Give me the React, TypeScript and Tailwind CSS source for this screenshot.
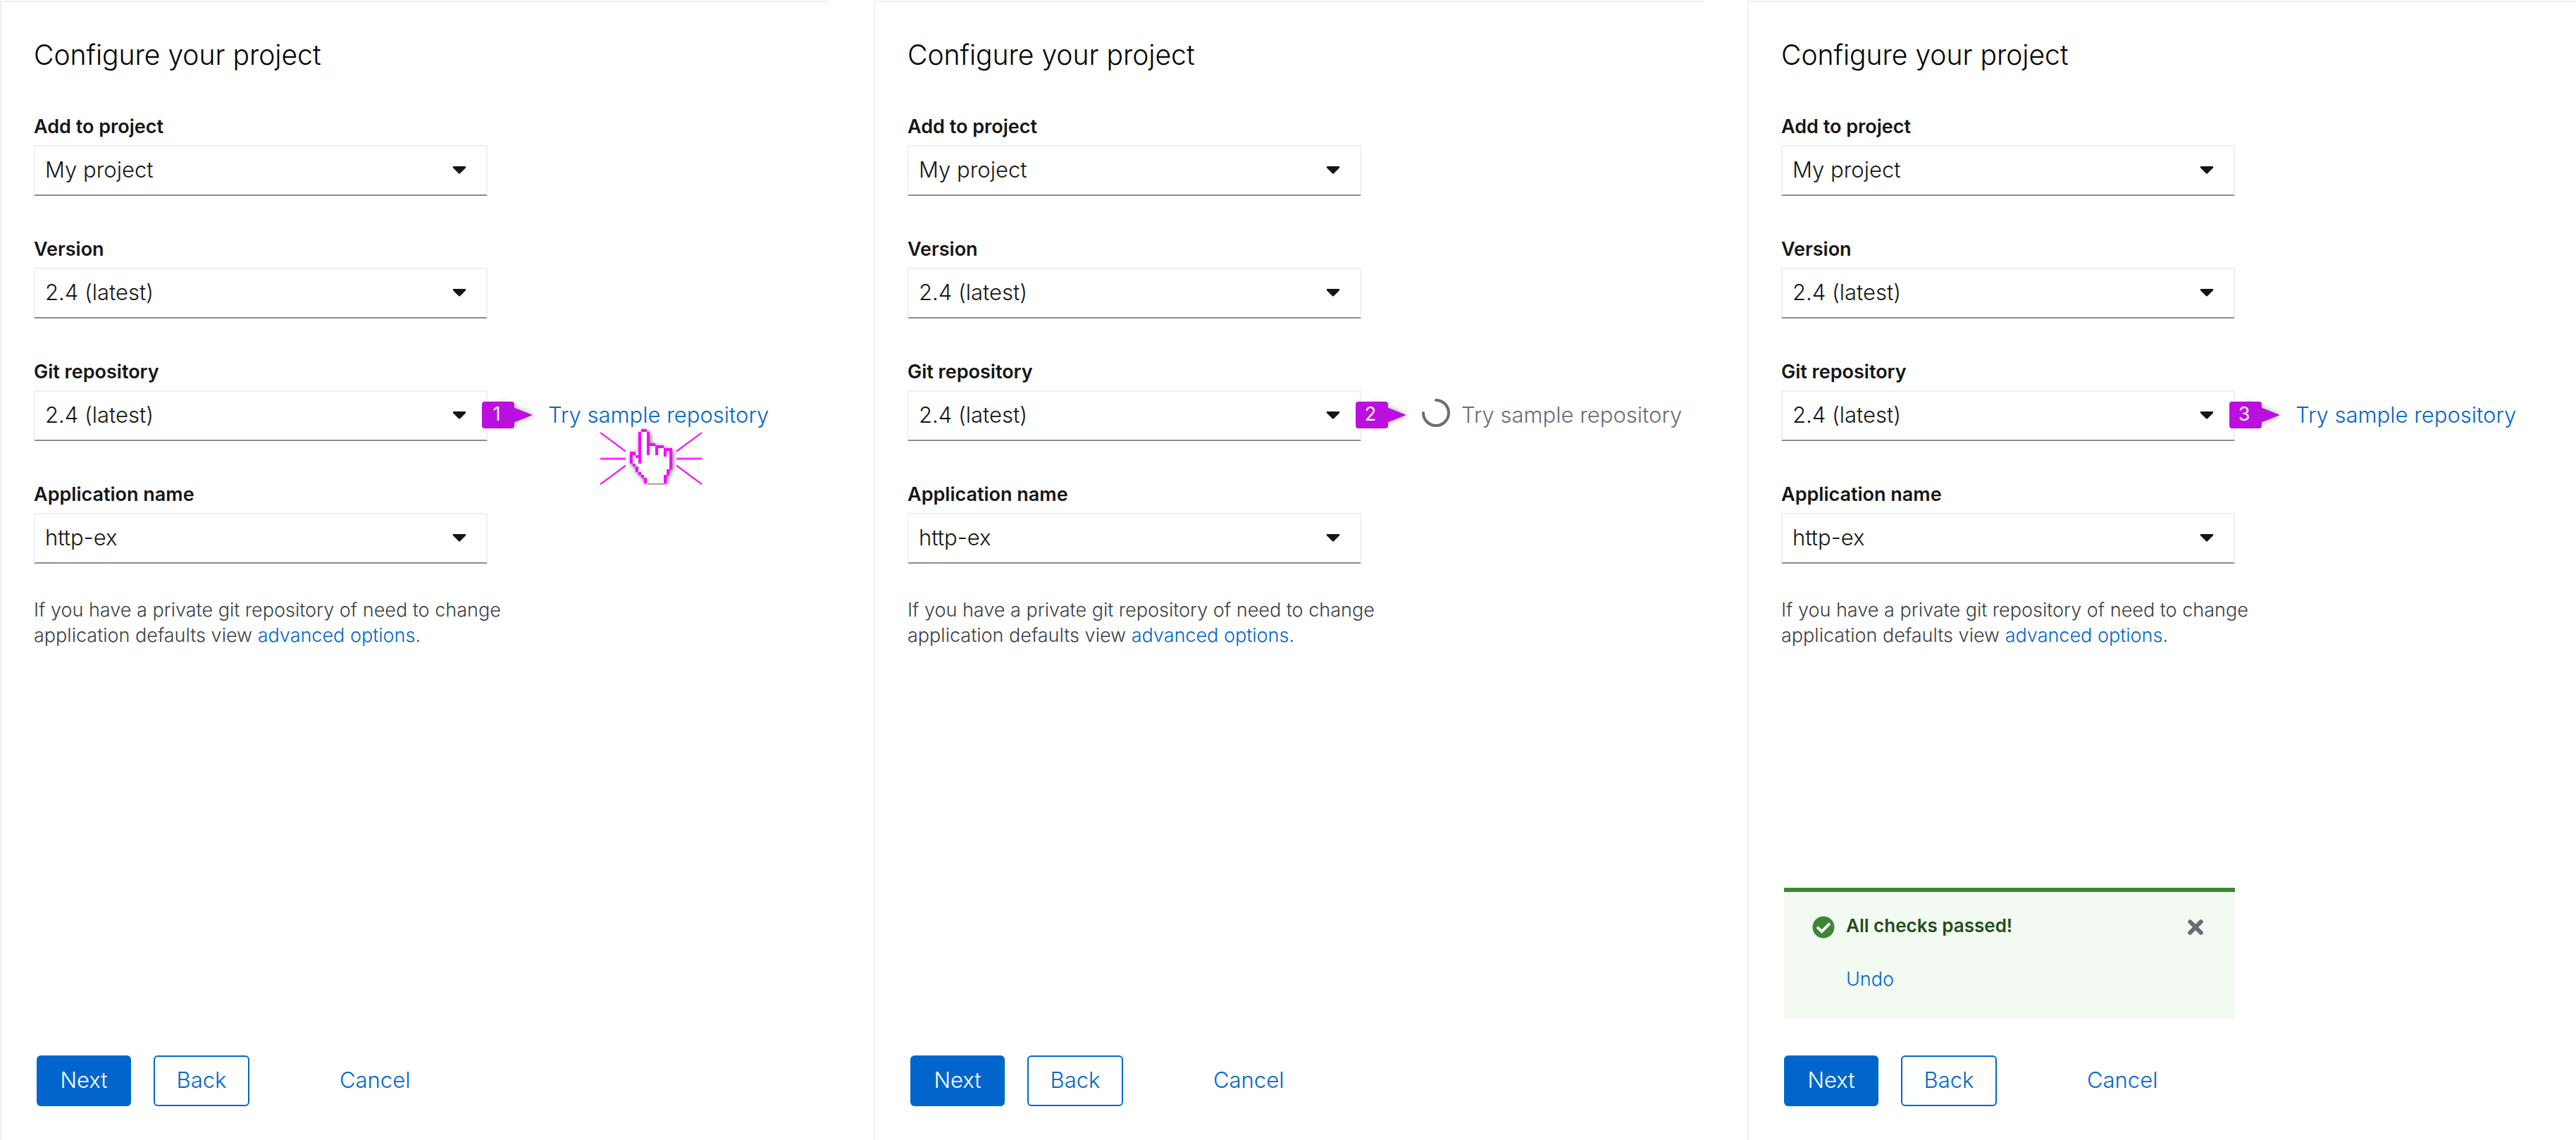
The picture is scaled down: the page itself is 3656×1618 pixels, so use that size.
import React, { useId } from "react";
import { FaCaretDown, FaCheckCircle, FaTimes } from "react-icons/fa";

type SampleState = "clicked" | "loading" | "done";

function Dropdown({ id, value }: { id: string; value: string }) {
  return (
    <div className="relative w-[644px] max-w-full">
      <select
        id={id}
        defaultValue={value}
        className="block h-[72px] w-full appearance-none rounded-none border-2 border-[#f0f0f0] border-b-[#8a8d90] bg-white pb-0.5 pl-3.5 pr-16 text-[31px] font-light text-[#151515]"
      >
        <option>{value}</option>
      </select>
      <FaCaretDown
        aria-hidden
        className="pointer-events-none absolute right-6 top-[18px] size-8 text-[#151515]"
      />
    </div>
  );
}

function Field({
  label,
  value,
  children,
}: {
  label: string;
  value: string;
  children?: React.ReactNode;
}) {
  const id = useId();
  return (
    <div>
      <label
        htmlFor={id}
        className="mb-2 block text-[27px] font-semibold leading-9 text-[#151515]"
      >
        {label}
      </label>
      <div className="relative flex items-center">
        <Dropdown id={id} value={value} />
        {children}
      </div>
    </div>
  );
}

function StepMarker({ step }: { step: number }) {
  return (
    <div className="absolute left-[636px] top-4 h-[38px] w-[72px]">
      <svg
        viewBox="0 0 48 38"
        className="absolute left-6 top-0 h-[38px] w-12 overflow-visible drop-shadow-[0_0_4px_rgba(0,0,0,0.35)]"
        aria-hidden
      >
        <path d="M0 0L48 19L0 38Z" fill="#bb0fe0" />
      </svg>
      <span className="relative flex h-[38px] w-[46px] items-center justify-center rounded bg-[#bb0fe0] pb-1 pr-1 text-[27px] leading-none text-white">
        {step}
      </span>
    </div>
  );
}

function Spinner() {
  return (
    <svg viewBox="0 0 40 40" className="mb-2 size-10 shrink-0" fill="none" aria-hidden>
      <path
        d="M20 2A18 18 0 1 1 2 20"
        stroke="#6a6e73"
        strokeWidth="4"
        strokeLinecap="round"
      />
    </svg>
  );
}

/* x, y, width, height of every stroke in the pixel-art pointer */
const HAND: [number, number, number, number][] = [
  [210, 28, 24, 12],
  [198, 40, 12, 133],
  [234, 40, 12, 97],
  [246, 86, 24, 14],
  [270, 97, 12, 40],
  [282, 97, 24, 12],
  [306, 109, 12, 36],
  [318, 109, 24, 12],
  [330, 121, 12, 76],
  [318, 197, 12, 24],
  [306, 221, 12, 37],
  [162, 124, 24, 13],
  [162, 137, 12, 36],
  [186, 137, 12, 12],
  [174, 173, 12, 12],
  [186, 185, 12, 24],
  [198, 209, 12, 12],
  [210, 221, 12, 12],
  [222, 233, 12, 25],
];

function ClickPointer() {
  return (
    <svg
      viewBox="0 0 510 264"
      className="pointer-events-none absolute left-[792px] top-[46px] h-[88px] w-[170px]"
      aria-hidden
    >
      <defs>
        <filter id="handShadow" x="-30%" y="-30%" width="160%" height="160%">
          <feDropShadow dx="4" dy="6" stdDeviation="9" floodColor="#000" floodOpacity="0.6" />
        </filter>
      </defs>
      <g stroke="#ff00ff" strokeWidth="6">
        <path d="M36 42L144 122M468 42L360 122M36 262L144 182M468 262L360 182M36 154H144M360 154H468" />
        <path d="M36 149H144M360 149H472" strokeWidth="5" opacity="0.3" />
      </g>
      <g filter="url(#handShadow)" shapeRendering="crispEdges">
        <path
          d="M210 28H234V88H270V98H306V110H342V197H330V221H318V258H222V233H210V221H198V209H186V185H174V173H162V124H198V40H210Z"
          fill="#fff"
        />
        {HAND.map(([x, y, w, h]) => (
          <rect key={`${x}-${y}`} x={x} y={y} width={w} height={h} fill="#ff00ff" />
        ))}
      </g>
    </svg>
  );
}

function SampleRepository({ state }: { state: SampleState }) {
  if (state === "loading") {
    return (
      <div className="ml-[86px] flex items-center gap-4">
        <Spinner />
        <button
          type="button"
          disabled
          className="whitespace-nowrap pb-0.5 text-[31px] font-light leading-10 text-[#6a6e73]"
        >
          Try sample repository
        </button>
      </div>
    );
  }
  return (
    <>
      <button
        type="button"
        className="ml-[86px] whitespace-nowrap pb-0.5 text-[31px] font-light leading-10 text-[#0066cc]"
      >
        Try sample repository
      </button>
      {state === "clicked" && <ClickPointer />}
    </>
  );
}

function SuccessAlert() {
  return (
    <div
      role="status"
      className="mb-[52px] ml-1 flex w-[640px] max-w-full items-start gap-4 border-t-[6px] border-[#3e8635] bg-[#f3faf2] px-10 pb-[38px] pt-[30px] leading-9"
    >
      <FaCheckCircle aria-hidden className="mt-1 size-8 shrink-0 text-[#3e8635]" />
      <div className="flex-1">
        <h2 className="text-[26px] font-semibold leading-9 text-[#1e4f18]">All checks passed!</h2>
        <button type="button" className="mt-10 block text-[27px] font-light leading-9 text-[#0066cc]">
          Undo
        </button>
      </div>
      <button type="button" aria-label="Close" className="mt-1 text-[#6a6e73]">
        <FaTimes className="size-8" />
      </button>
    </div>
  );
}

function Panel({ step, state }: { step: number; state: SampleState }) {
  return (
    <form
      className="flex flex-col border-l-2 border-t-2 border-[#f0f0f0] pb-12 pl-[46px] pt-[51px]"
      onSubmit={(e) => e.preventDefault()}
    >
      <h1 className="mb-[60px] text-[39px] font-light leading-[48px] text-black">
        Configure your project
      </h1>
      <div className="flex flex-col gap-[58px]">
        <Field label="Add to project" value="My project" />
        <Field label="Version" value="2.4 (latest)" />
        <Field label="Git repository" value="2.4 (latest)">
          <StepMarker step={step} />
          <SampleRepository state={state} />
        </Field>
        <Field label="Application name" value="http-ex" />
      </div>
      <p className="mt-12 text-[27px] font-light leading-9 text-[#3c3f42]">
        <span className="block">If you have a private git repository of need to change</span>
        application defaults view{" "}
        <a href="#advanced" className="text-[#0066cc]">
          advanced options
        </a>
        .
      </p>
      <div className="mt-auto pt-16">
        {state === "done" && <SuccessAlert />}
        <div className="ml-1 flex gap-8 text-[31px] font-light">
          <button
            type="submit"
            className="h-[72px] w-[134px] rounded-md bg-[#0066cc] pb-0.5 text-white"
          >
            Next
          </button>
          <button
            type="button"
            className="h-[72px] w-[136px] rounded-md border-2 border-[#0066cc] pb-0.5 text-[#0066cc]"
          >
            Back
          </button>
          <button type="button" className="ml-16 h-[72px] px-8 pb-0.5 text-[#0066cc]">
            Cancel
          </button>
        </div>
      </div>
    </form>
  );
}

export default function App() {
  return (
    <main className="grid min-h-screen grid-cols-1 gap-16 bg-white pt-px font-['Inter',sans-serif] min-[3000px]:grid-cols-3">
      <Panel step={1} state="clicked" />
      <Panel step={2} state="loading" />
      <Panel step={3} state="done" />
    </main>
  );
}
